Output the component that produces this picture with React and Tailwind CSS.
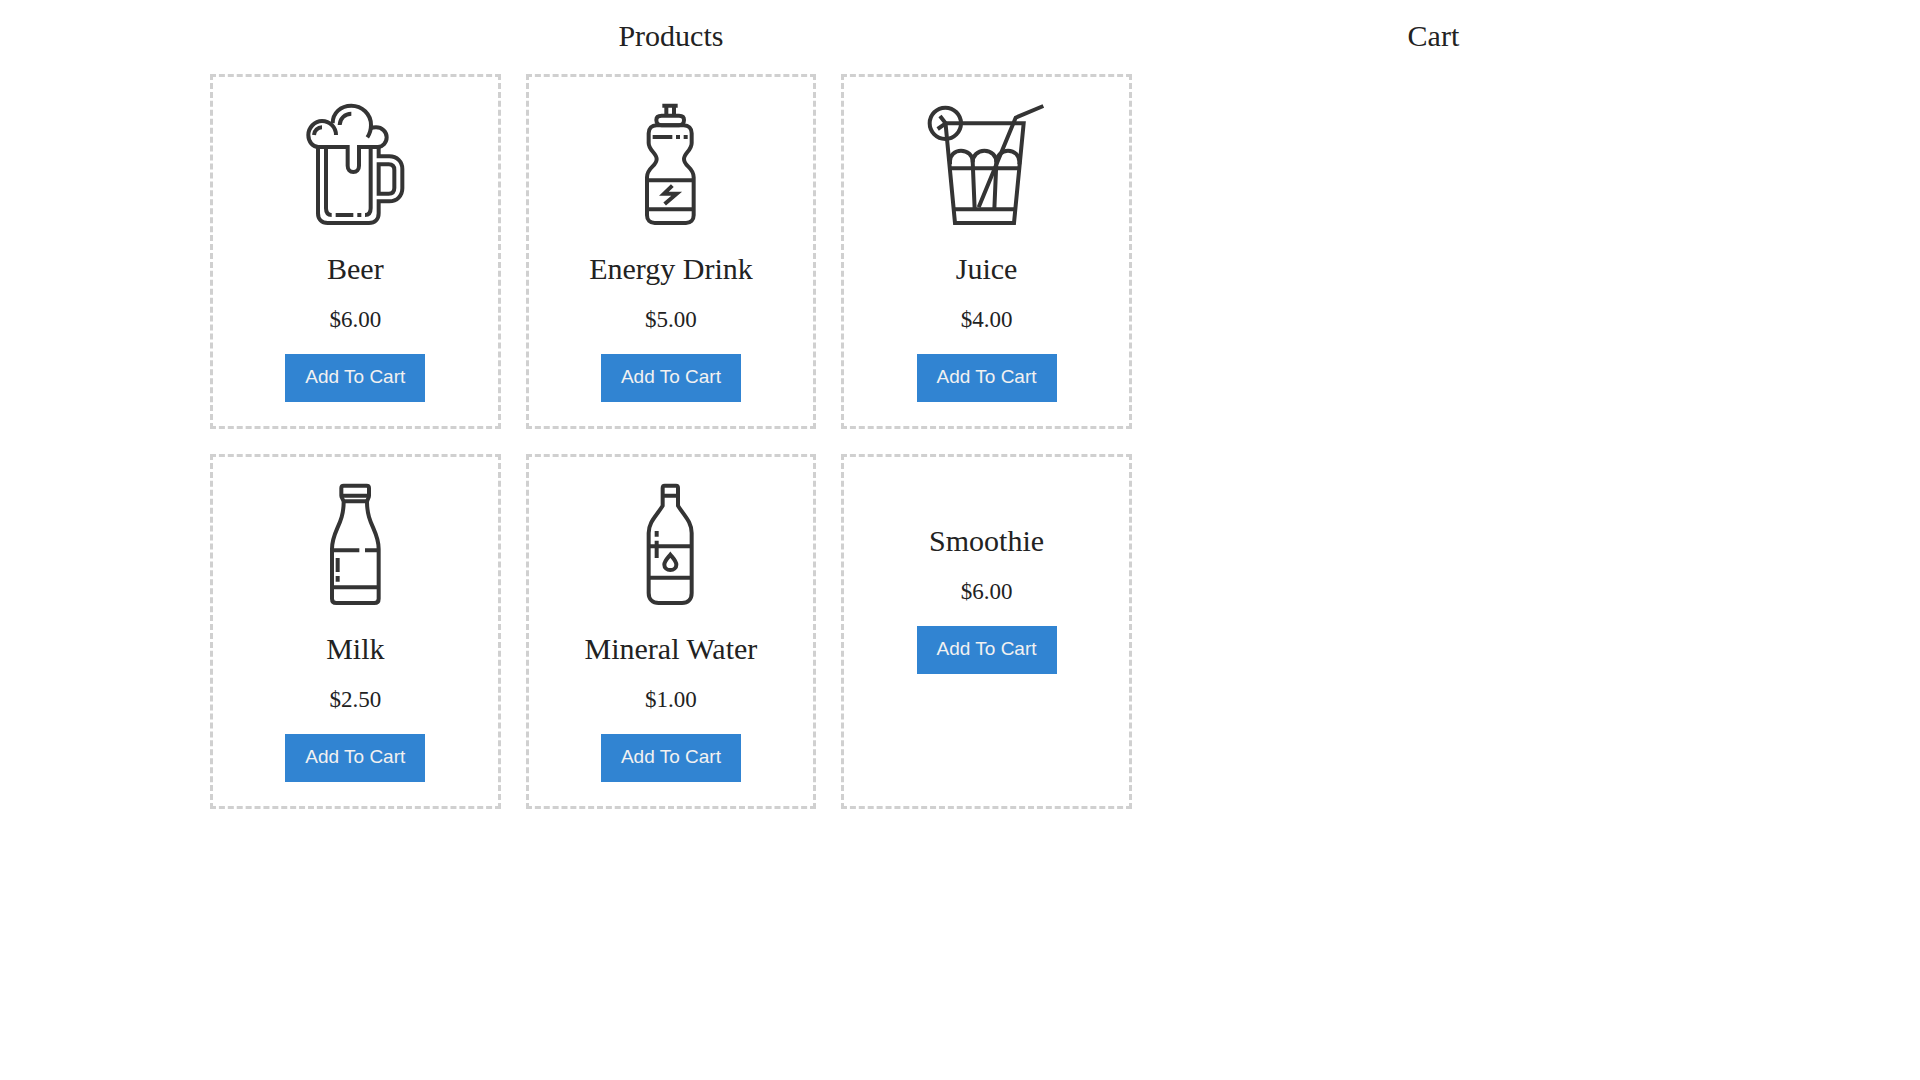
// Shop page: product grid on the left, cart on the right

import React, { useState } from 'react';

function DrinkIcon({ label, viewBox, children }) {
  return (
    <svg
      role="img"
      aria-label={label}
      viewBox={viewBox}
      className="w-[125px] h-[125px]"
      fill="none"
      stroke="#343434"
      strokeWidth="12"
    >
      {children}
    </svg>
  );
}

function BeerIcon() {
  return (
    <DrinkIcon label="Beer" viewBox="10 21 375 375">
      {/* Foam */}
      <path d="M139 120 C139 97 121 78 97 78 C75 78 56 98 56 120 C56 141 70 156 86 156" />
      <path d="M129 85 C129 54 153 32 185 32 C217 32 244 57 244 90 C244 105 240 117 233 127" />
      <path d="M243 100 C247 98 253 97 259 97 C277 97 291 110 291 127 C291 143 279 155 265 156" />
      <path d="M73 120 C74 107 84 97 97 97" />
      <path d="M150 90 C151 70 166 56 185 56" />
      {/* Mug */}
      <path d="M80 156 H174 V212 C174 224 181 231 191 231 C201 231 208 224 208 212 V156 H272" />
      <path d="M85 156 V355 C85 373 96 384 114 384 H238 C256 384 267 373 267 355 V319 H299 C322 319 338 302 338 280 V222 C338 200 322 184 299 184 H267 V156" />
      <path d="M109 156 V340 C109 353 115 360 126 360" />
      <path d="M243 156 V340 C243 353 237 360 226 360" />
      <path d="M138 360 H191 M203 360 H215" />
      <path d="M267 208 H297 C308 208 314 214 314 225 V279 C314 290 308 296 297 296 H267 Z" />
    </DrinkIcon>
  );
}

function EnergyDrinkIcon() {
  return (
    <DrinkIcon label="Energy Drink" viewBox="10 21 375 375">
      <path d="M173 32 H219 M185 32 V62 M208 32 V62" />
      <path d="M171 62 H223 C233 62 238 67 238 75 C238 84 233 91 223 91 H171 C161 91 155 84 155 75 C155 67 161 62 171 62 Z" />
      <path d="M156 91 H237 C252 91 261 100 261 115 V144 C261 167 238 174 238 192 C238 215 267 216 267 247 V361 C267 375 258 384 244 384 H150 C136 384 127 375 127 361 V247 C127 216 156 215 156 192 C156 174 132 167 132 144 V115 C132 100 141 91 156 91 Z" />
      <path d="M144 126 H203 M214 126 H226 M237 126 H249" />
      <path d="M127 256 H267 M127 343 H267" />
      <path d="M203 272 L178 296 H216 L180 327" />
    </DrinkIcon>
  );
}

function JuiceIcon() {
  return (
    <DrinkIcon label="Juice" viewBox="27 21 375 375">
      {/* Lemon slice */}
      <circle cx="91" cy="85" r="47" />
      <path d="M75 63 L92 85 L68 102" />
      {/* Glass */}
      <path d="M91 85 H326 L297 384 H120 L91 79" />
      <path d="M103 220 H313 M117 343 H301" />
      {/* Straw */}
      <path d="M385 33 L302 68 L191 337" />
      {/* Ice */}
      <path d="M105 208 V198 C105 181 119 167 138 167 C158 167 173 181 173 199 L179 343" />
      <path d="M173 202 C173 182 188 167 208 167 C229 167 244 182 244 202 L238 343" />
      <path d="M244 202 C246 180 261 167 279 167 C299 167 313 182 313 200 V208" />
    </DrinkIcon>
  );
}

function MilkIcon() {
  return (
    <DrinkIcon label="Milk" viewBox="10 21 375 375">
      <path d="M162 32 H231 C236 32 238 35 238 39 V62 C238 68 234 72 232 80 C232 150 267 166 267 222 V371 C267 380 262 384 254 384 H140 C132 384 127 380 127 371 V222 C127 166 162 150 162 80 C160 72 155 68 155 62 V39 C155 35 158 32 162 32 Z" />
      <path d="M155 62 H238 M162 79 H232" />
      <path d="M127 226 H209 M226 226 H267 M127 337 H267" />
      <path d="M144 249 V291 M144 303 V320" />
    </DrinkIcon>
  );
}

function MineralWaterIcon() {
  return (
    <DrinkIcon label="Mineral Water" viewBox="10 21 375 375">
      <path d="M180 32 H214 C218 32 220 35 220 39 V92 C238 122 261 140 261 174 V354 C261 373 250 384 232 384 H162 C144 384 132 373 132 354 V174 C132 140 156 122 174 92 V39 C174 35 176 32 180 32 Z" />
      <path d="M174 62 H220 M132 214 H261 M132 308 H261" />
      <path d="M156 168 V185 M156 197 V249" />
      <path d="M197 239 C188 250 179 258 179 269 C179 279 187 285 197 285 C207 285 215 279 215 269 C215 258 206 250 197 239 Z" />
    </DrinkIcon>
  );
}

const products = [
  { name: 'Beer', price: 6, Icon: BeerIcon },
  { name: 'Energy Drink', price: 5, Icon: EnergyDrinkIcon },
  { name: 'Juice', price: 4, Icon: JuiceIcon },
  { name: 'Milk', price: 2.5, Icon: MilkIcon },
  { name: 'Mineral Water', price: 1, Icon: MineralWaterIcon },
  { name: 'Smoothie', price: 6, Icon: null },
];

function ProductCard({ product, onAdd }) {
  const { name, price, Icon } = product;

  return (
    <article className="flex flex-col items-center border-3 border-dashed border-[#d0d0d0] px-6 pt-[25px] pb-6 text-center">
      {Icon ? <Icon /> : <div className="h-[17px]" />}
      <h3 className="mt-6 text-[30px] leading-9">{name}</h3>
      <p className="mt-[19px] text-[23px] leading-7">${price.toFixed(2)}</p>
      <button
        type="button"
        aria-label={`Add To Cart: ${name}`}
        onClick={() => onAdd(product)}
        className="mt-5 cursor-pointer bg-[#3184d2] px-5 pt-[13px] pb-[15px] font-['Liberation_Sans',Arial,sans-serif] text-[19px] leading-5 text-[#f1f1f1] hover:bg-[#2a72b9]"
      >
        Add To Cart
      </button>
    </article>
  );
}

export default function App() {
  const [cart, setCart] = useState([]);

  return (
    <main className="mx-auto grid max-w-[1500px] grid-cols-[5fr_3fr] gap-[25px] pt-[18px] font-['Liberation_Serif','Times_New_Roman',serif] text-[#222222]">
      <section>
        <h2 className="mb-5 text-center text-[30px] leading-9">Products</h2>
        <div className="grid grid-cols-3 gap-[25px]">
          {products.map((product) => (
            <ProductCard
              key={product.name}
              product={product}
              onAdd={(item) => setCart([...cart, item])}
            />
          ))}
        </div>
      </section>

      <section>
        <h2 className="mb-5 text-center text-[30px] leading-9">Cart</h2>
        <ul className="text-[23px] leading-9">
          {cart.map((item, i) => (
            <li key={i} className="flex justify-between">
              <span>{item.name}</span>
              <span>${item.price.toFixed(2)}</span>
            </li>
          ))}
        </ul>
      </section>
    </main>
  );
}
